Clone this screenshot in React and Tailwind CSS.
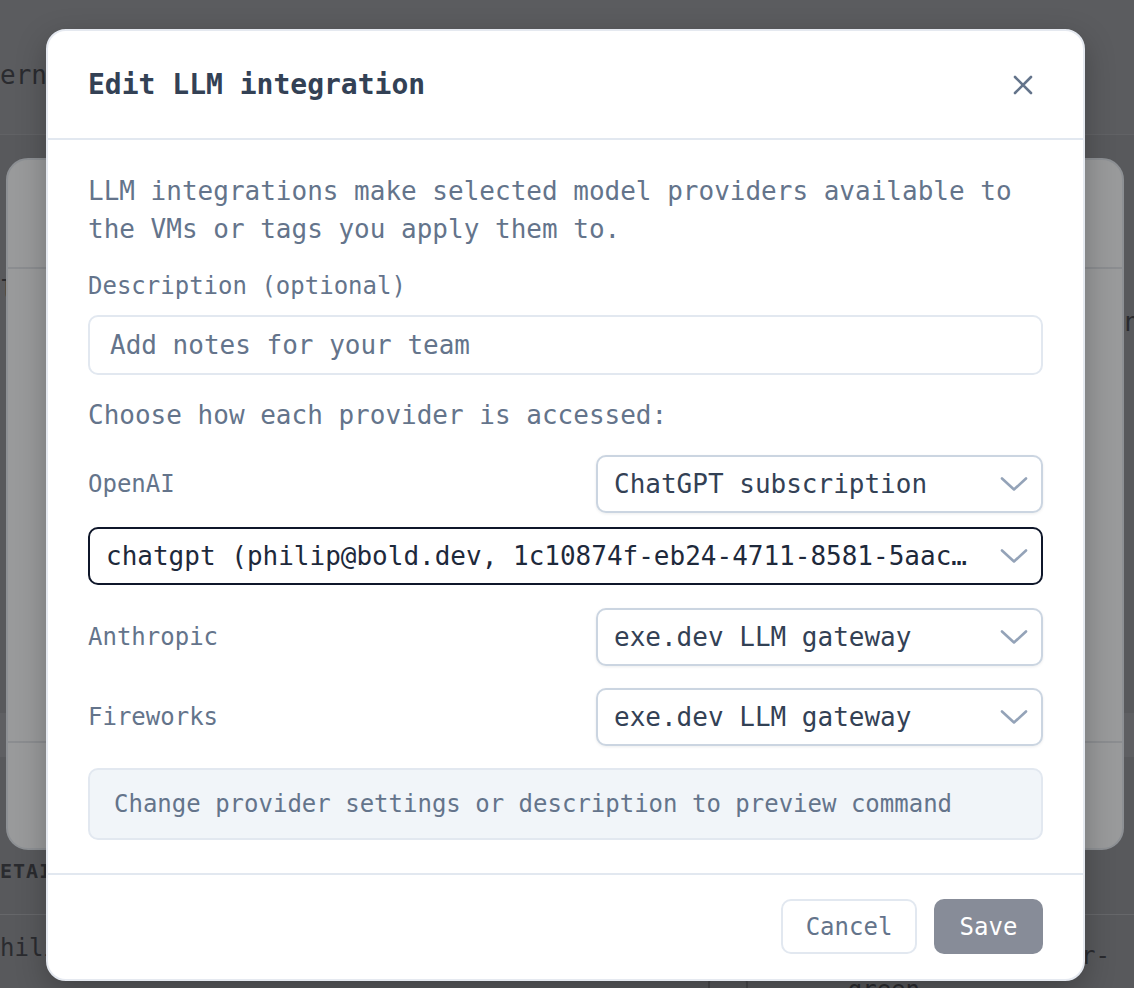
import React from 'react';

const Chevron = () => (
  <svg width="28" height="16" viewBox="0 0 28 16" fill="none" className="shrink-0">
    <path d="M2 2.5 L14 13.5 L26 2.5" stroke="#94a3b8" strokeWidth="2.6" strokeLinecap="round" strokeLinejoin="round" />
  </svg>
);

const CloseIcon = () => (
  <svg width="20" height="20" viewBox="0 0 20 20" fill="none">
    <path d="M2 2 L18 18 M18 2 L2 18" stroke="#64748b" strokeWidth="2.6" strokeLinecap="round" />
  </svg>
);

const Select = ({ value, dark, className }) => (
  <div
    className={`flex items-center h-[58px] rounded-[10px] border-2 pl-[16px] pr-[13px] bg-white ${
      dark
        ? 'border-[#0f172a] text-[#1e293b]'
        : 'border-[#cbd5e1] text-[#334155] shadow-[0_1px_3px_rgba(15,23,42,0.08)]'
    } ${className || ''}`}
  >
    <span className="flex-1 min-w-0 truncate mr-[25px]">{value}</span>
    <Chevron />
  </div>
);

const ProviderRow = ({ label, value }) => (
  <div className="flex items-center justify-between">
    <span className="text-[24px] text-[#64748b]">{label}</span>
    <Select value={value} className="w-[447px]" />
  </div>
);

const App = () => {
  return (
    <div className="relative w-[1134px] h-[988px] overflow-hidden bg-[#58595c] font-['DejaVu_Sans_Mono',monospace] text-[26px] leading-[38px]">
      {/* page behind the overlays */}
      <div className="text-[#2a2b2f]">
        <div className="h-[135px] bg-[#5b5c5f] border-b border-[#616265] pt-[56px]">
          <p className="whitespace-nowrap">ernal</p>
        </div>
        <div className="h-[136px]" />
        <div className="flex justify-between h-[70px]">
          <span className="pt-[0px]">l</span>
          <span className="translate-x-[6px] pt-[32px]">n</span>
        </div>
        <div className="h-[372px]" />
        <div className="h-[44px] bg-[#5e5f62]" />
        <div className="h-[158px] flex items-end pb-[24px] border-b border-[#66676a]">
          <span className="text-[20px] font-bold tracking-[1px] -ml-[13px]">DETAILS</span>
        </div>
        <div className="flex justify-between pt-[14px] text-[24px]">
          <span>hilip</span>
          <span className="pr-[24px] pt-[8px]">r-</span>
        </div>
        <div className="flex justify-end pr-[214px] -mt-[4px] text-[24px]">
          <span className="mr-[100px] mt-[6px] w-[40px] h-[20px] rounded-[6px] border-2 border-[#47484b]" />
          <span>green</span>
        </div>
      </div>

      {/* first dialog, dimmed by second overlay */}
      <div className="absolute left-[6px] top-[158px] w-[1118px] h-[692px] rounded-[22px] bg-[#999a9b] border-2 border-[#8d9094]">
        <div className="h-[109px] border-b-2 border-[#8b8d90]" />
        <div className="h-[474px] border-b-2 border-[#8b8d90]" />
      </div>

      {/* active dialog */}
      <div className="absolute left-[46px] top-[29px] w-[1039px] rounded-[20px] bg-white border-2 border-[#e5e9f0] shadow-[0_10px_30px_rgba(0,0,0,0.25)]">
        <div className="flex items-center justify-between pl-[40px] pr-[50px] pt-[36px] pb-[35px] border-b-2 border-[#e2e8f0]">
          <h2 className="text-[28px] leading-[36px] font-bold text-[#334155]">Edit LLM integration</h2>
          <button className="flex items-center">
            <CloseIcon />
          </button>
        </div>

        <div className="px-[40px] pt-[32px] pb-[33px] flex flex-col">
          <p className="text-[#64748b]">
            LLM integrations make selected model providers available to the VMs or tags you apply them to.
          </p>

          <label className="mt-[19px] text-[24px] text-[#64748b]">Description (optional)</label>
          <div className="mt-[10px] h-[60px] rounded-[10px] border-2 border-[#e2e8f0] flex items-center px-[20px] text-[#64748b]">
            Add notes for your team
          </div>

          <p className="mt-[21px] text-[#64748b]">Choose how each provider is accessed:</p>

          <div className="mt-[21px]">
            <ProviderRow label="OpenAI" value="ChatGPT subscription" />
          </div>
          <Select
            dark
            className="mt-[14px] h-[57px]"
            value="chatgpt (philip@bold.dev, 1c10874f-eb24-4711-8581-5aac90f3e2d1)"
          />
          <div className="mt-[23px]">
            <ProviderRow label="Anthropic" value="exe.dev LLM gateway" />
          </div>
          <div className="mt-[22px]">
            <ProviderRow label="Fireworks" value="exe.dev LLM gateway" />
          </div>

          <div className="mt-[22px] h-[72px] rounded-[10px] border-2 border-[#e2e8f0] bg-[#f1f5f9] flex items-center px-[24px] text-[24px] text-[#64748b]">
            Change provider settings or description to preview command
          </div>
        </div>

        <div className="flex justify-end gap-[17px] px-[40px] pt-[24px] pb-[25px] border-t-2 border-[#e2e8f0] text-[24px]">
          <button className="h-[55px] w-[136px] rounded-[10px] border-2 border-[#e2e8f0] bg-white text-[#64748b]">
            Cancel
          </button>
          <button className="h-[55px] w-[109px] rounded-[10px] bg-[#878c98] text-white">Save</button>
        </div>
      </div>
    </div>
  );
};

export default App;
